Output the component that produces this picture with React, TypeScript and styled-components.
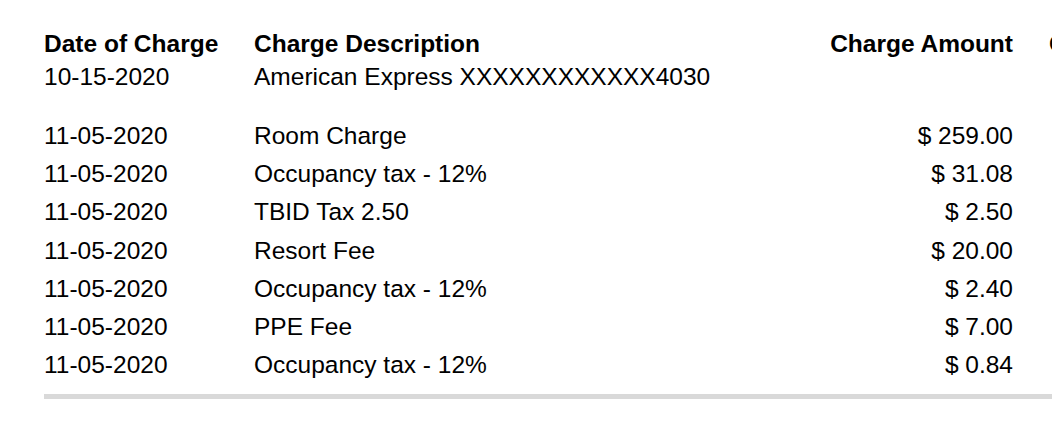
import styled, { createGlobalStyle } from "styled-components";

const Global = createGlobalStyle`
  html, body {
    margin: 0;
    padding: 0;
    background: #ffffff;
    overflow: hidden;
  }
  body {
    font-family: "Liberation Sans", Arial, Helvetica, sans-serif;
    color: #000;
  }
`;

const Page = styled.div`
  padding: 27px 0 0 44px;
  width: 1300px;
`;

const Row = styled.div<{ $tall?: boolean }>`
  display: grid;
  grid-template-columns: 174px 513px 210px 240px;
  column-gap: 36px;
  font-size: 24.5px;
  line-height: ${({ $tall }) => ($tall ? "38.2px" : "33px")};
  white-space: nowrap;
`;

const HeadCell = styled.div<{ $right?: boolean }>`
  font-weight: bold;
  text-align: ${({ $right }) => ($right ? "right" : "left")};
`;

const Cell = styled.div<{ $right?: boolean }>`
  text-align: ${({ $right }) => ($right ? "right" : "left")};
`;

const Spacer = styled.div`
  height: 24px;
`;

const Rule = styled.div`
  margin-top: 10px;
  height: 5px;
  background: #d9d9d9;
`;

const charges = [
  { date: "11-05-2020", desc: "Room Charge", amount: "$ 259.00" },
  { date: "11-05-2020", desc: "Occupancy tax - 12%", amount: "$ 31.08" },
  { date: "11-05-2020", desc: "TBID Tax 2.50", amount: "$ 2.50" },
  { date: "11-05-2020", desc: "Resort Fee", amount: "$ 20.00" },
  { date: "11-05-2020", desc: "Occupancy tax - 12%", amount: "$ 2.40" },
  { date: "11-05-2020", desc: "PPE Fee", amount: "$ 7.00" },
  { date: "11-05-2020", desc: "Occupancy tax - 12%", amount: "$ 0.84" },
];

function App() {
  return (
    <>
      <Global />
      <Page>
        <Row>
          <HeadCell>Date of Charge</HeadCell>
          <HeadCell>Charge Description</HeadCell>
          <HeadCell $right>Charge Amount</HeadCell>
          <HeadCell>Credit Amount</HeadCell>
        </Row>
        <Row>
          <Cell>10-15-2020</Cell>
          <Cell>American Express XXXXXXXXXXXX4030</Cell>
          <Cell $right></Cell>
          <Cell></Cell>
        </Row>
        <Spacer />
        {charges.map((c, i) => (
          <Row $tall key={i}>
            <Cell>{c.date}</Cell>
            <Cell>{c.desc}</Cell>
            <Cell $right>{c.amount}</Cell>
            <Cell></Cell>
          </Row>
        ))}
        <Rule />
      </Page>
    </>
  );
}

export default App;
